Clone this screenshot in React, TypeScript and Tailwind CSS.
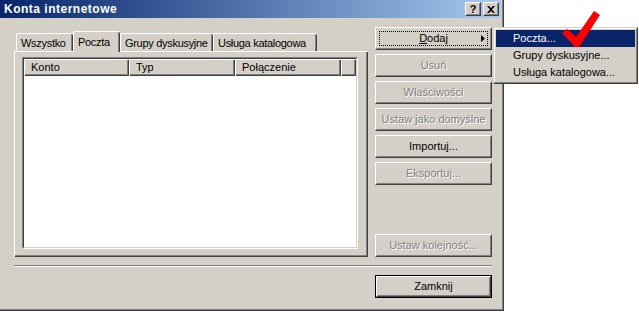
import React from "react";

const raised = "border border-t-white border-l-white border-r-[#404040] border-b-[#404040]";
const raisedInner = "border border-t-[#d4d0c8] border-l-[#d4d0c8] border-r-[#808080] border-b-[#808080]";
const grayText = "text-[#808080] [text-shadow:1px_1px_0_#ffffff]";

type BtnProps = {
  children: React.ReactNode;
  disabled?: boolean;
  focused?: boolean;
  isDefault?: boolean;
  className?: string;
};

const Button = ({ children, disabled, focused, isDefault, className = "" }: BtnProps) => {
  const face = (
    <div className={`h-full ${raised}`}>
      <div className={`h-full ${raisedInner} relative flex items-center justify-center`}>
        {focused && <div className="absolute inset-[2px] border border-dotted border-black" />}
        <span className={`whitespace-nowrap ${disabled ? grayText : "text-black"}`}>{children}</span>
      </div>
    </div>
  );
  return (
    <div className={`w-[117px] h-[23px] ${className}`}>
      {isDefault ? <div className="h-full border border-black">{face}</div> : face}
    </div>
  );
};

const Tab = ({ label, width, selected }: { label: string; width: string; selected?: boolean }) => (
  <div
    className={`${width} ${
      selected ? "h-[21px] -mb-px z-10 bg-[#d4d0c8]" : "h-[18px] mt-[2px]"
    } relative border-t border-l border-t-white border-l-white rounded-tl-[2px] rounded-tr-[2px]`}
  >
    <div className="h-full border-r border-r-[#404040] rounded-tr-[2px]">
      <div className="h-full border-r border-r-[#808080] flex items-center pl-[4px] pt-px whitespace-nowrap overflow-hidden tracking-[-0.3px]">
        {label}
      </div>
    </div>
  </div>
);

const HeaderCell = ({ label, width }: { label: string; width: string }) => (
  <div className={`${width} h-full border-t border-l border-t-white border-l-white`}>
    <div className="h-full border-r border-b border-r-[#404040] border-b-[#404040]">
      <div className="h-full border-r border-b border-r-[#808080] border-b-[#808080] flex items-center pl-[6px]">
        {label}
      </div>
    </div>
  </div>
);

const TitleButton = ({ children }: { children: React.ReactNode }) => (
  <div className={`w-[16px] h-[14px] bg-[#d4d0c8] ${raised}`}>
    <div className={`h-full ${raisedInner} flex items-center justify-center`}>{children}</div>
  </div>
);

export default function App() {
  return (
    <div className="relative w-[639px] h-[312px] bg-white overflow-hidden font-['Liberation_Sans',Arial,sans-serif] text-[11px] text-black leading-none">
      {/* window */}
      <div className="w-[504px] h-[311px] border-r border-b border-r-[#404040] border-b-[#404040]">
        <div className="h-full border-r border-b border-r-[#808080] border-b-[#808080]">
          <div className="h-full pr-px pb-px bg-[#d4d0c8] flex flex-col">
            {/* title bar */}
            <div className="h-[18px] bg-linear-to-r from-[#0a246a] to-[#a6caf0] flex items-center pl-[4px] pr-[2px]">
              <span className="text-white font-bold text-[12px] tracking-[0.5px]">Konta internetowe</span>
              <div className="ml-auto flex gap-[2px]">
                <TitleButton>
                  <span className="font-bold text-[11px] leading-none">?</span>
                </TitleButton>
                <TitleButton>
                  <svg width="8" height="7" viewBox="0 0 8 7">
                    <path d="M0 0h2l2 2 2-2h2L5 3.5 8 7H6L4 5 2 7H0l3-3.5z" fill="black" />
                  </svg>
                </TitleButton>
              </div>
            </div>

            {/* body */}
            <div className="flex pl-[14px]">
              <div className="w-[354px] mt-[13px] flex flex-col">
                <div className="flex pl-[2px] h-[20px] items-start">
                  <Tab label="Wszystko" width="w-[57px]" />
                  <Tab label="Poczta" width="w-[47px]" selected />
                  <Tab label="Grupy dyskusyjne" width="w-[93px]" />
                  <Tab label="Usługa katalogowa" width="w-[104px]" />
                </div>
                <div className="h-[206px] border-t border-l border-t-white border-l-white">
                  <div className="h-full border-r border-b border-r-[#404040] border-b-[#404040]">
                    <div className="h-full border-r border-b border-r-[#808080] border-b-[#808080] pl-[7px] pt-[5px]">
                      {/* list view */}
                      <div className="w-[336px] h-[192px] border-t border-l border-t-[#808080] border-l-[#808080] border-r border-b border-r-white border-b-white">
                        <div className="h-full border-t border-l border-t-[#404040] border-l-[#404040] border-r border-b border-r-[#d4d0c8] border-b-[#d4d0c8] bg-white flex flex-col">
                          <div className="h-[17px] flex bg-[#d4d0c8]">
                            <HeaderCell label="Konto" width="w-[105px]" />
                            <HeaderCell label="Typ" width="w-[106px]" />
                            <HeaderCell label="Połączenie" width="w-[106px]" />
                            <HeaderCell label="" width="flex-1" />
                          </div>
                        </div>
                      </div>
                    </div>
                  </div>
                </div>
              </div>

              <div className="ml-[7px] mt-[9px] h-[230px] flex flex-col gap-[4px]">
                <div className="relative">
                  <Button focused>
                    <span className="underline">D</span>odaj
                  </Button>
                  <svg className="absolute left-[106px] top-[8px]" width="4" height="7" viewBox="0 0 4 7">
                    <path d="M0 0L4 3.5L0 7z" fill="black" />
                  </svg>
                </div>
                <Button disabled>Usuń</Button>
                <Button disabled>Właściwości</Button>
                <Button disabled>Ustaw jako domyślne</Button>
                <Button>Importuj...</Button>
                <Button disabled>Eksportuj...</Button>
                <Button disabled className="mt-auto">
                  Ustaw kolejność...
                </Button>
              </div>
            </div>

            <div className="ml-[14px] mt-[8px] w-[478px] border-t border-b border-t-[#808080] border-b-white" />

            <div className="mt-[8px] ml-[375px]">
              <Button isDefault>Zamknij</Button>
            </div>
          </div>
        </div>
      </div>

      {/* popup menu */}
      <div className="absolute left-[493px] top-[27px] w-[145px] h-[57px] border border-t-[#d4d0c8] border-l-[#d4d0c8] border-r-[#404040] border-b-[#404040]">
        <div className="h-full border border-t-white border-l-white border-r-[#808080] border-b-[#808080] bg-[#d4d0c8] p-px">
          <div className="h-[17px] bg-[#0a246a] text-white flex items-center pl-[17px]">Poczta...</div>
          <div className="h-[17px] flex items-center pl-[17px]">Grupy dyskusyjne...</div>
          <div className="h-[17px] flex items-center pl-[17px]">Usługa katalogowa...</div>
        </div>
      </div>

      {/* red check mark */}
      <svg className="absolute left-[558px] top-[6px]" width="46" height="46" viewBox="0 0 46 46">
        <path d="M4 27L9 23L18 31L36 5L42 9L21 41L17 41Z" fill="#ff0000" />
      </svg>
    </div>
  );
}
